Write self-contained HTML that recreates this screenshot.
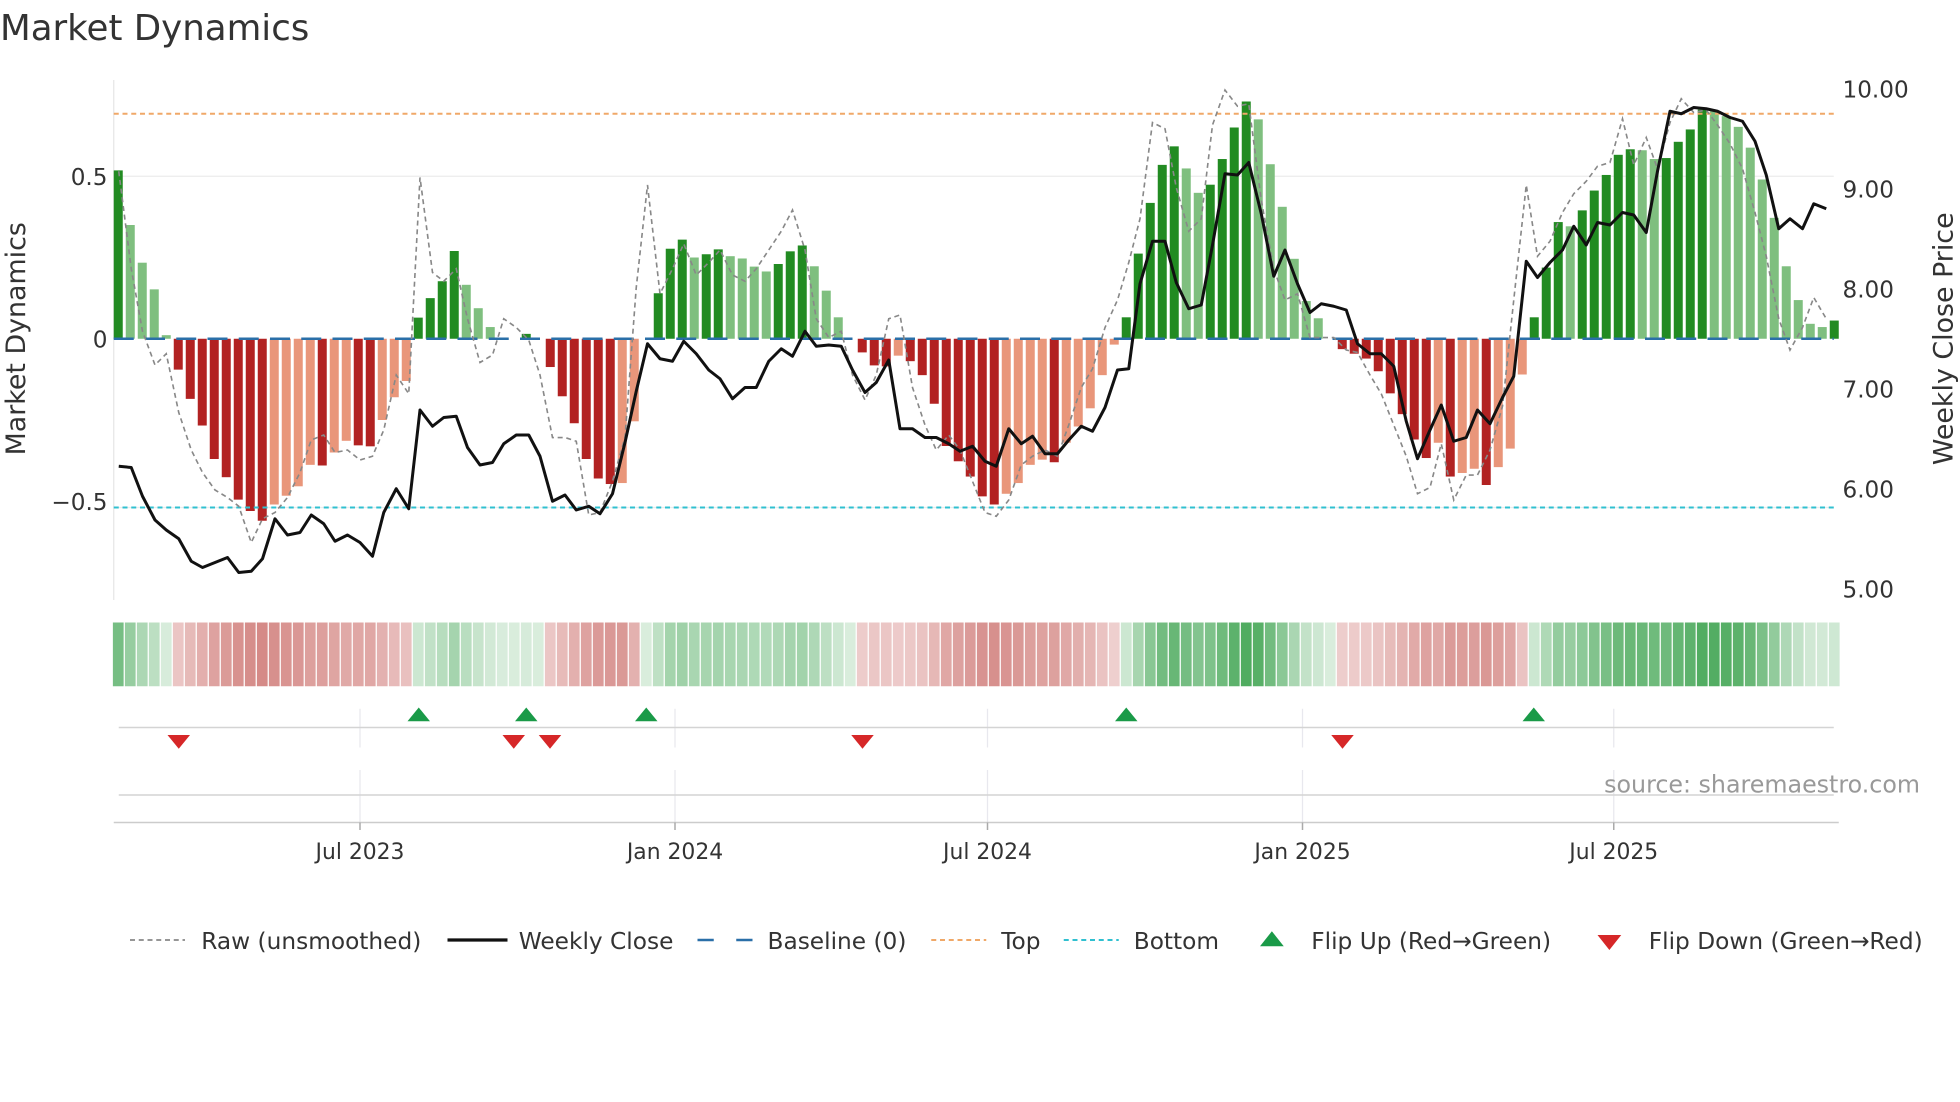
<!DOCTYPE html>
<html><head><meta charset="utf-8">
<style>
html,body{margin:0;padding:0;background:#fff;}
svg{display:block;font-family:"DejaVu Sans","Liberation Sans",sans-serif;}
</style></head>
<body>
<svg id="c" width="1960" height="1102" viewBox="0 0 1568 881.6" xmlns="http://www.w3.org/2000/svg">
<rect width="1568" height="882" fill="#fff"/>
<text x="0" y="32" font-size="28.5" fill="#333">Market Dynamics</text>
<g stroke="#ececec" stroke-width="1">
<line x1="91" y1="141" x2="1467" y2="141"/>
<line x1="91" y1="406" x2="1467" y2="406"/>
</g>
<line x1="91" y1="64" x2="91" y2="480" stroke="#e6e6e6" stroke-width="1"/>
<g id="bars"></g>
<line x1="91" y1="91" x2="1467" y2="91" stroke="#f0a868" stroke-width="1.6" stroke-dasharray="4,3"/>
<line x1="91" y1="406" x2="1467" y2="406" stroke="#30c0d0" stroke-width="1.6" stroke-dasharray="4,3"/>
<line x1="91" y1="271" x2="1467" y2="271" stroke="#2a6fa8" stroke-width="2" stroke-dasharray="16,9"/>
<polyline id="raw" fill="none" stroke="#888" stroke-width="1.3" stroke-dasharray="4,3"/>
<polyline id="close" fill="none" stroke="#111" stroke-width="2.4" stroke-linejoin="round"/>
<g font-size="18.5" fill="#333" text-anchor="end">
<text x="86" y="148">0.5</text>
<text x="86" y="278">0</text>
<text x="86" y="408">−0.5</text>
</g>
<text transform="translate(20,271) rotate(-90)" font-size="21.5" fill="#333" text-anchor="middle">Market Dynamics</text>
<g font-size="18.5" fill="#333">
<text x="1474" y="78">10.00</text>
<text x="1474" y="158">9.00</text>
<text x="1474" y="238">8.00</text>
<text x="1474" y="318">7.00</text>
<text x="1474" y="398">6.00</text>
<text x="1474" y="478">5.00</text>
</g>
<text transform="translate(1562,271) rotate(-90)" font-size="21.5" fill="#333" text-anchor="middle">Weekly Close Price</text>
<g id="heat"></g>
<g stroke="#e8e8ee" stroke-width="1">
<line x1="288" y1="567" x2="288" y2="598"/><line x1="540" y1="567" x2="540" y2="598"/>
<line x1="790" y1="567" x2="790" y2="598"/><line x1="1042" y1="567" x2="1042" y2="598"/>
<line x1="1291" y1="567" x2="1291" y2="598"/>
<line x1="288" y1="616" x2="288" y2="658"/><line x1="540" y1="616" x2="540" y2="658"/>
<line x1="790" y1="616" x2="790" y2="658"/><line x1="1042" y1="616" x2="1042" y2="658"/>
<line x1="1291" y1="616" x2="1291" y2="658"/>
</g>
<line x1="95" y1="582" x2="1467" y2="582" stroke="#d4d4d4" stroke-width="1.2"/>
<line x1="95" y1="636" x2="1467" y2="636" stroke="#d4d4d4" stroke-width="1.2"/>
<line x1="91" y1="658" x2="1471" y2="658" stroke="#cccccc" stroke-width="1.2"/>
<g id="flips"></g>
<g stroke="#aaa" stroke-width="1.2">
<line x1="288" y1="658" x2="288" y2="664"/><line x1="540" y1="658" x2="540" y2="664"/>
<line x1="790" y1="658" x2="790" y2="664"/><line x1="1042" y1="658" x2="1042" y2="664"/>
<line x1="1291" y1="658" x2="1291" y2="664"/>
</g>
<g font-size="17.5" fill="#333" text-anchor="middle">
<text x="288" y="687">Jul 2023</text><text x="540" y="687">Jan 2024</text>
<text x="790" y="687">Jul 2024</text><text x="1042" y="687">Jan 2025</text>
<text x="1291" y="687">Jul 2025</text>
</g>
<text x="1536" y="634" font-size="19" fill="#999" text-anchor="end">source: sharemaestro.com</text>
<g font-size="18.6" fill="#333">
<line x1="104" y1="752" x2="148" y2="752" stroke="#888" stroke-width="1.4" stroke-dasharray="4,3"/>
<text x="161" y="759">Raw (unsmoothed)</text>
<line x1="358" y1="752" x2="406" y2="752" stroke="#111" stroke-width="2.6"/>
<text x="415" y="759">Weekly Close</text>
<line x1="558" y1="752" x2="602" y2="752" stroke="#2a6fa8" stroke-width="2" stroke-dasharray="13,18"/>
<text x="614" y="759">Baseline (0)</text>
<line x1="745" y1="752" x2="789" y2="752" stroke="#f0a868" stroke-width="1.6" stroke-dasharray="4,3"/>
<text x="801" y="759">Top</text>
<line x1="851" y1="752" x2="895" y2="752" stroke="#30c0d0" stroke-width="1.6" stroke-dasharray="4,3"/>
<text x="907" y="759">Bottom</text>
<polygon points="1008,757 1027,757 1017.5,745" fill="#1a9a48"/>
<text x="1049" y="759">Flip Up (Red→Green)</text>
<polygon points="1278,748 1297,748 1287.5,760" fill="#d62728"/>
<text x="1319" y="759">Flip Down (Green→Red)</text>
</g>
</svg>
<script>
var V=[0.518,0.35,0.234,0.152,0.011,-0.095,-0.185,-0.267,-0.37,-0.426,-0.495,-0.53,-0.56,-0.51,-0.483,-0.454,-0.388,-0.39,-0.35,-0.314,-0.328,-0.331,-0.25,-0.18,-0.13,
0.065,0.125,0.177,0.27,0.166,0.094,0.036,0.002,0,0.015,0,-0.087,-0.177,-0.26,-0.37,-0.43,-0.447,-0.444,-0.254,0,0.14,
0.277,0.305,0.25,0.26,0.275,0.254,0.247,0.222,0.207,0.23,0.269,0.287,0.223,0.148,0.066,0,-0.042,-0.082,-0.085,-0.052,-0.069,-0.112,-0.2,-0.33,-0.377,-0.424,-0.485,-0.51,-0.477,-0.444,-0.388,-0.372,-0.38,-0.32,-0.27,-0.214,-0.112,-0.018,
0.066,0.262,0.418,0.535,0.592,0.524,0.449,0.474,0.553,0.65,0.73,0.675,0.537,0.406,0.246,0.116,0.063,0,-0.032,-0.046,-0.061,-0.1,-0.168,-0.232,-0.31,-0.367,-0.32,-0.424,-0.413,-0.4,-0.45,-0.395,-0.338,-0.11,
0.066,0.219,0.359,0.346,0.395,0.456,0.504,0.566,0.583,0.58,0.553,0.556,0.606,0.644,0.705,0.7,0.685,0.652,0.588,0.49,0.372,0.223,0.119,0.046,0.036,0.056];
var cols={D:"#228b22",L:"#7fbf7f",R:"#b22222",S:"#e9967a"};
var ns="http://www.w3.org/2000/svg";
function el(t,a,p){var e=document.createElementNS(ns,t);for(var k in a)e.setAttribute(k,a[k]);p.appendChild(e);return e;}
var bars=document.getElementById("bars"),heat=document.getElementById("heat");
for(var i=0;i<V.length;i++){
 var x=94.6+9.6*i,v=V[i],h=Math.abs(v)*260;
 var prev=i>0?V[i-1]:0;
 var grow=(i==0)||Math.abs(v)>=Math.abs(prev)||(prev*v<=0);
 var c=v>=0?(grow?"D":"L"):(grow?"R":"S");
 if(h>0.3) el("rect",{x:x-3.6,y:v>=0?271-h:271,width:7.2,height:h,fill:cols[c]},bars);
 var t=Math.min(1,Math.abs(v)/0.72),r,g,b;
 if(v>=0){t=0.12+0.88*t;r=236+(80-236)*t;g=246+(172-246)*t;b=238+(96-238)*t;}
 else{t=0.12+0.88*t;r=244+(206-244)*t;g=222+(118-222)*t;b=222+(114-222)*t;}
 el("rect",{x:x-4.3,y:498,width:8.6,height:51,fill:"rgb("+(r|0)+","+(g|0)+","+(b|0)+")"},heat);
}
var CL=[[95,373],[105,374],[114,397],[124,416],[133,424],[143,431],[153,449],[162,454],[172,450],[182,446],[191,458],[201,457],[210,447],[220,415],[230,428],[240,426],[249,412],[259,419],[268,433],[278,428],[288,434],[298,445],[307,410],[317,391],[327,407],[336,328],[346,341],[355,334],[365,333],[374,358],[384,372],[394,370],[403,355],[413,348],[423,348],[432,365],[442,401],[452,396],[461,408],[471,405],[480,411],[490,395],[500,354],[509,313],[518,275],[528,287],[538,289],[547,273],[557,283],[567,296],[576,303],[586,319],[596,310],[605,310],[615,289],[625,279],[634,285],[644,265],[653,277],[663,276],[673,277],[682,296],[692,314],[701,306],[711,288],[720,343],[730,343],[740,350],[749,350],[759,355],[768,361],[778,357],[788,369],[797,373],[807,343],[817,355],[826,349],[836,363],[846,363],[855,352],[865,341],[874,345],[884,326],[894,296],[903,295],[912,227],[922,193],[932,193],[941,226],[951,247],[961,244],[970,196],[980,139],[990,140],[999,130],[1009,171],[1019,221],[1028,200],[1038,227],[1048,250],[1057,243],[1067,245],[1077,248],[1086,275],[1096,283],[1105,283],[1115,293],[1125,337],[1134,367],[1144,344],[1153,324],[1163,353],[1173,350],[1182,328],[1192,339],[1202,318],[1211,301],[1221,209],[1230,222],[1240,210],[1250,200],[1259,181],[1269,196],[1278,178],[1288,180],[1298,170],[1307,172],[1317,186],[1326,137],[1336,89],[1345,91],[1355,86],[1365,87],[1374,89],[1384,94],[1394,97],[1404,113],[1413,140],[1423,183],[1432,175],[1442,183],[1451,163],[1461,167]];
var RW=[[95,137],[105,215],[114,265],[124,292],[133,283],[143,330],[153,360],[162,378],[172,392],[182,398],[191,405],[201,434],[210,415],[220,410],[230,398],[240,378],[249,352],[259,348],[268,362],[278,360],[288,368],[298,365],[307,344],[317,300],[327,315],[336,142],[346,218],[355,225],[365,215],[374,255],[384,290],[394,284],[403,255],[413,262],[423,272],[432,300],[442,350],[452,350],[461,353],[471,412],[480,410],[490,385],[500,350],[509,230],[518,148],[528,235],[538,215],[547,195],[557,220],[567,210],[576,200],[586,220],[596,225],[605,215],[615,200],[625,185],[634,168],[644,200],[653,255],[663,270],[673,265],[682,300],[692,320],[701,300],[711,255],[720,252],[730,310],[740,340],[749,360],[759,348],[768,360],[778,385],[788,410],[797,413],[807,400],[817,372],[826,365],[836,360],[846,365],[855,340],[865,310],[874,295],[884,262],[894,240],[903,210],[912,175],[922,98],[932,103],[941,150],[951,185],[961,175],[970,100],[980,72],[990,85],[999,83],[1009,160],[1019,215],[1028,240],[1038,235],[1048,270],[1057,270],[1067,270],[1077,280],[1086,282],[1096,300],[1105,315],[1115,340],[1125,365],[1134,395],[1144,390],[1153,355],[1163,400],[1173,380],[1182,380],[1192,360],[1202,325],[1211,240],[1221,148],[1230,205],[1240,193],[1250,170],[1259,155],[1269,145],[1278,133],[1288,130],[1298,95],[1307,132],[1317,110],[1326,135],[1336,98],[1345,79],[1355,90],[1365,88],[1374,100],[1384,115],[1394,135],[1404,170],[1413,205],[1423,255],[1432,280],[1442,262],[1451,238],[1461,255]];
document.getElementById("close").setAttribute("points",CL.map(function(p){return p.join(",");}).join(" "));
document.getElementById("raw").setAttribute("points",RW.map(function(p){return p.join(",");}).join(" "));
var fl=document.getElementById("flips");
[335,421,517,901,1227].forEach(function(x){el("polygon",{points:(x-9)+",577 "+(x+9)+",577 "+x+",566",fill:"#1a9a48"},fl);});
[143,411,440,690,1074].forEach(function(x){el("polygon",{points:(x-9)+",588 "+(x+9)+",588 "+x+",599",fill:"#d62728"},fl);});
</script>
</body></html>
